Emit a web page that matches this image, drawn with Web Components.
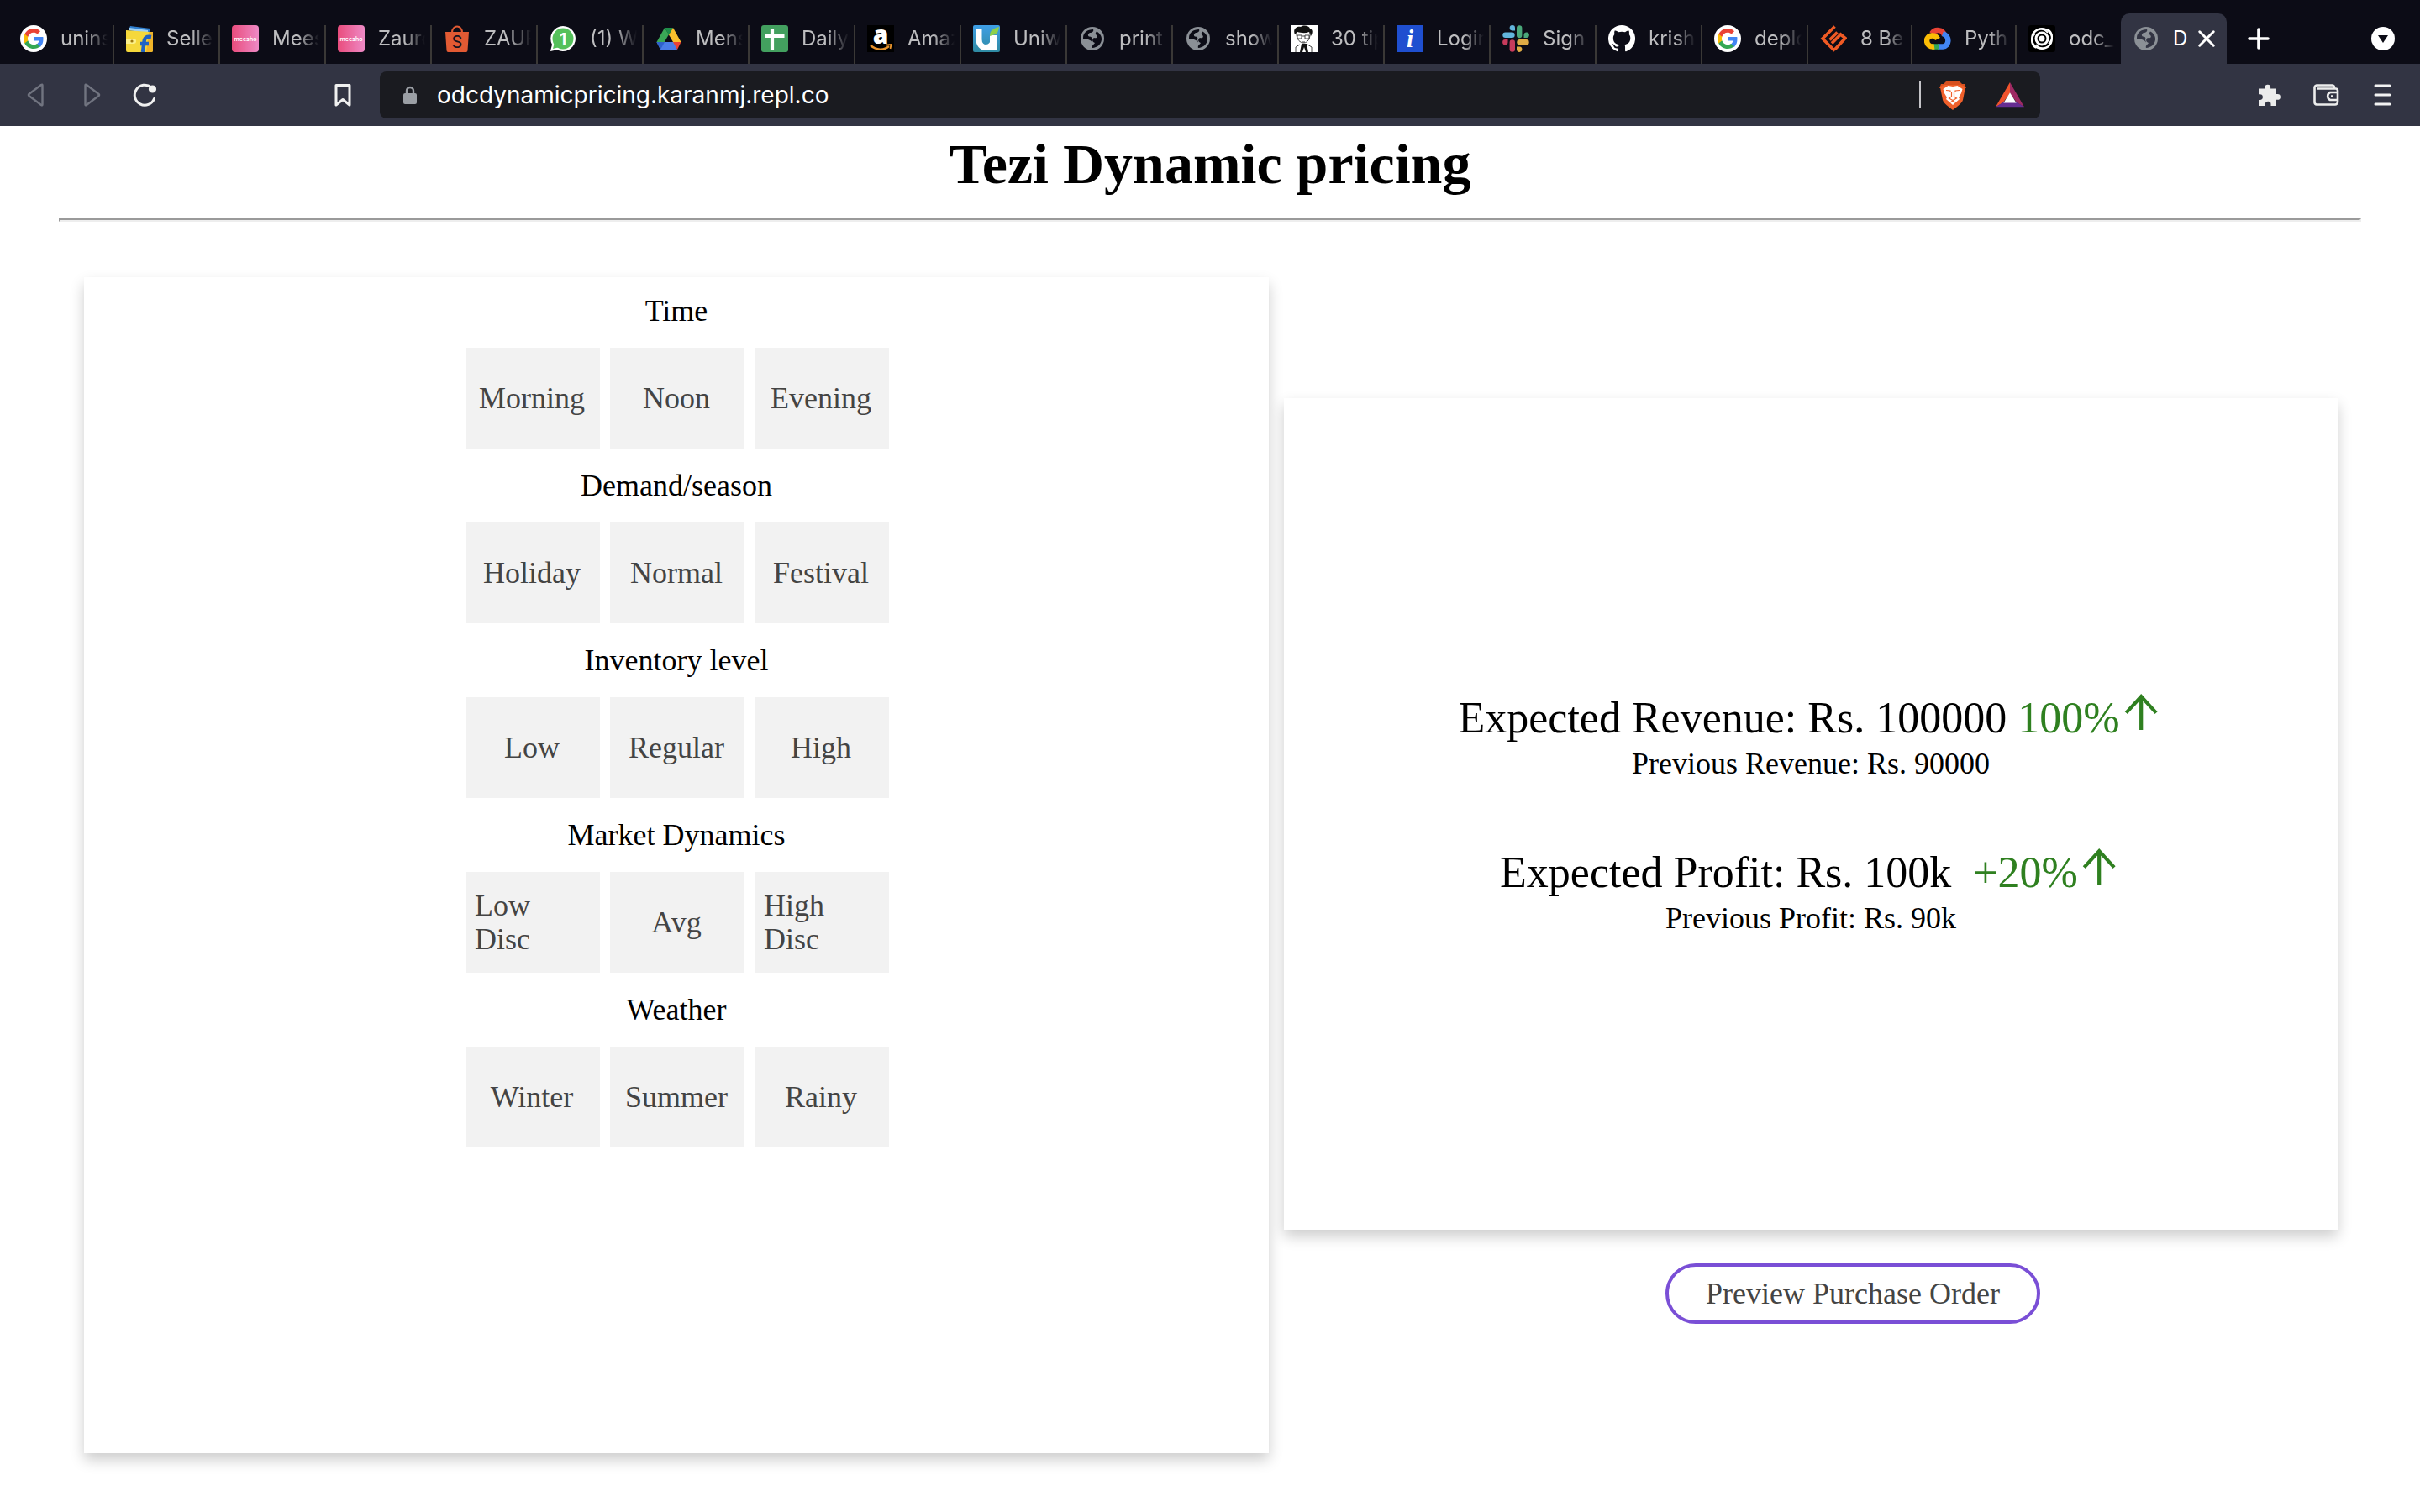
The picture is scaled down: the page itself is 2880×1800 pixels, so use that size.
<!DOCTYPE html>
<html lang="en">
<head>
<meta charset="utf-8">
<title>Dynamic pricing</title>
<style>
  html, body { margin: 0; background: #fff; }
  body { font-family: "Liberation Serif", "Times New Roman", serif; font-size: 36px; line-height: 40px; color: #000; }
</style>
</head>
<body>
<browser-window>
  <tab-strip slot="tabs"></tab-strip>
  <address-toolbar slot="toolbar" url="odcdynamicpricing.karanmj.repl.co"></address-toolbar>
  <pricing-page></pricing-page>
</browser-window>

<script>
const ICONS = {
  google: `<circle cx="16" cy="16" r="16" fill="#fff"/><g transform="translate(4 4)"><path fill="#4285f4" d="M23.5 12.3c0-.9-.1-1.500-.2-2.200H12v4.500h6.500c-.3 1.700-1.300 3-2.700 3.900v3.200h4.300c2.300-2.200 3.400-5.300 3.400-9.400z"/><path fill="#34a853" d="M12 24c3.200 0 6-1.100 8-2.900l-4-3.100c-1.100.8-2.500 1.200-4 1.200-3.100 0-5.800-2.100-6.700-4.900H1.300v3.100C3.300 21.300 7.300 24 12 24z"/><path fill="#fbbc05" d="M5.300 14.300c-.5-1.500-.5-3.100 0-4.600V6.600h-4c-1.700 3.400-1.700 7.400 0 10.800z"/><path fill="#ea4335" d="M12 4.800c1.800 0 3.300.6 4.600 1.800L20 3.200C18 1.200 15.200 0 12 0 7.300 0 3.300 2.700 1.300 6.600l4 3.100C6.200 6.900 8.900 4.800 12 4.800z"/></g>`,
  flipkart: `<path fill="#2f7fd0" d="M5 1l24 3-2 6L3 6z"/><path fill="#9fd0f2" d="M4 3l22 3v3L3 6z"/><path fill="#f5d83b" d="M0 6l27 2h5v22a2 2 0 0 1-2 2H2a2 2 0 0 1-2-2z"/><path fill="#f0b429" d="M27 8h5v22a2 2 0 0 1-2 2h-6z"/><path fill="#fbf08a" d="M0 16h9a3 3 0 0 1 0 6H0z"/><circle cx="7" cy="19" r="1.600" fill="#a07a10"/><path d="M30 14c-6-1-8 1-8.500 6L20 32M17 22h10" stroke="#1e62c4" stroke-width="4.500" fill="none"/>`,
  meesho: `<defs><linearGradient id="m"><stop stop-color="#e94c7c"/><stop offset="1" stop-color="#ee8ac6"/></linearGradient></defs><rect width="32" height="32" rx="4" fill="url(#m)"/><text x="16" y="19" text-anchor="middle" font-family="Inter" font-weight="600" font-size="7" fill="#fff">meesho</text>`,
  shopee: `<path d="M10 9c0-10 12-10 12 0" stroke="#e25a33" stroke-width="2" fill="none"/><path fill="#e25a33" d="M2 8h28l-1.500 22a2 2 0 0 1-2 2h-21a2 2 0 0 1-2-2z"/><text x="16" y="27" text-anchor="middle" font-family="Inter" font-size="20" fill="#151320">S</text>`,
  whatsapp: `<path fill="#fff" d="M16 1a15 15 0 1 1-7 28.300L1 31l2-8A15 15 0 0 1 16 1z"/><circle cx="16" cy="16" r="12.500" fill="#55c15b"/><path fill="#55c15b" d="M4 28l2-8 6 6z"/><text x="16" y="23" text-anchor="middle" font-family="Inter" font-weight="700" font-size="19" fill="#fff">1</text>`,
  drive: `<path fill="#3aa757" d="M11 3L1.500 20 6 28 16 11z"/><path fill="#1e8e4a" d="M11 3h10l-5 8.500z"/><path fill="#fbc02d" d="M21 3l9.500 17H21L16 11.500z"/><path fill="#4a7de8" d="M1.500 20h22L26 29H6z"/><path fill="#2f62cc" d="M1.500 20H11l-5 9z"/><path fill="#ea4335" d="M21 20h9.500L26 29z"/>`,
  sheet: `<rect width="32" height="32" rx="3" fill="#43a05f"/><path d="M4.500 13h23M13 4v25" stroke="#fff" stroke-width="4.200"/>`,
  amazon: `<rect width="32" height="32" fill="#000"/><text x="16" y="22" text-anchor="middle" font-family="Open Sans" font-weight="800" font-size="30" fill="#fff">a</text><path d="M4 24c7 6 16 6 22 1" stroke="#e8932c" stroke-width="2.400" fill="none"/><path d="M23 23.500l5.500-.5-1 5" stroke="#e8932c" stroke-width="1.800" fill="none"/>`,
  uniware: `<defs><linearGradient id="u" x2="0" y2="1"><stop stop-color="#3f9fe6"/><stop offset="1" stop-color="#2f8ba3"/></linearGradient></defs><rect width="32" height="32" rx="2" fill="url(#u)"/><path d="M7 4v13c0 13 17 12 17 0" stroke="#fff" stroke-width="7" fill="none"/><path d="M20 12v18h8V12z" fill="#fff"/><path d="M20 13c0-7 4-9 11-11-1 6-2 9-8 10z" fill="#8ed04b"/>`,
  globe: `<circle cx="16" cy="16" r="14" fill="#8b9096"/><path fill="var(--hole,#0c0c16)" d="M5 15C5 9 10 5 17 5c1 2-1 4-4 4-2 1-3 3-1 4.500 3 0 4 1.500 3 4l1 3c-2-3-6-4.500-11-4.500zM21 7.500c4 2 6.500 6 6 10C26 23 22 26.500 16 27c-1-3 2-4 3-6-3-1-4-4-1-6 3 1 5-1 3-3s-1-3 0-4.500z"/>`,
  avatar: `<rect width="32" height="32" fill="#fff"/><path fill="#111" d="M5 11C2 4 8 1 12 2c4-3 10-1 11 2 4 1 3 6 1 9l-2-5c-5 2-10 1-14 0z"/><path d="M7 9c-1 15 17 17 16 0M8 12h5v4H8zM17 12h5v4h-5zM13 13h4M13 20h4M11 23l-5 3v6M20 23l5 3v6" stroke="#444" stroke-width="1" fill="none"/><path fill="#111" d="M13 22h6l2 10h-3l-2-6-2 6h-3z"/>`,
  login: `<rect width="32" height="32" fill="#1f4fd0"/><text x="16" y="26" text-anchor="middle" font-family="Liberation Serif" font-style="italic" font-weight="700" font-size="29" fill="#fff">i</text>`,
  slack: `<g stroke-width="6.400" stroke-linecap="round"><path stroke="#62b5dc" d="M3.500 11.800h8"/><path stroke="#4aa87a" d="M20.200 3.500v8.500"/><path stroke="#e0ac45" d="M20.500 20.200h8"/><path stroke="#c83b5c" d="M11.800 20.500v8"/></g><path fill="#62b5dc" d="M15 6.500h-3.500A3.200 3.200 0 1 1 15 3.300z"/><path fill="#4aa87a" d="M25.500 15v-3.500a3.200 3.200 0 1 1 3.300 3.500z"/><path fill="#e0ac45" d="M17 25.500h3.500a3.200 3.200 0 1 1-3.500 3.300z"/><path fill="#c83b5c" d="M6.500 17v3.500A3.200 3.200 0 1 1 3.200 17z"/>`,
  github: `<path fill="#fff" transform="scale(2)" d="M8 0a8 8 0 0 0-2.530 15.590c.4.070.550-.170.550-.380v-1.500c-2.010.37-2.530-.490-2.690-.940-.090-.23-.480-.940-.820-1.130-.280-.150-.680-.520-.010-.530.630-.010 1.080.580 1.230.820.720 1.210 1.870.870 2.330.660.070-.520.280-.870.510-1.070-1.780-.2-3.640-.890-3.640-3.950 0-.870.310-1.590.820-2.150-.080-.2-.360-1.020.080-2.120 0 0 .670-.210 2.200.820a7.400 7.400 0 0 1 4 0c1.530-1.040 2.200-.820 2.200-.820.440 1.100.160 1.920.080 2.120.510.560.820 1.270.820 2.150 0 3.070-1.870 3.750-3.650 3.950.290.250.540.730.540 1.480v2.200c0 .210.150.460.550.380A8 8 0 0 0 8 0z"/>`,
  gfg: `<path d="M17.500 1.500L3 16l14.500 14.500M11.500 17.500L20.500 8.500M17.500 29L30 15.500l-5.500-4.500L14 21.500" stroke="#f05a24" stroke-width="3.600" fill="none"/>`,
  cloud: `<g fill="none" stroke-width="6.500"><path stroke="#ea4335" d="M9 10c4-6 13-5 15 2"/><path stroke="#4285f4" d="M22 10c9 3 8 15 0 15.500h-6"/><path stroke="#34a853" d="M17 25.500H9"/><path stroke="#fbbc05" d="M12 25.500C1 27 0 12 10 12.500c3 0 5 2 6 4"/></g>`,
  odc: `<rect width="32" height="32" rx="3" fill="#000"/><circle cx="16" cy="16" r="12" fill="none" stroke="#fff" stroke-width="2"/><circle cx="16" cy="16" r="7" fill="none" stroke="#fff" stroke-width="3"/><path d="M5 11c5-8 14-8 18-2M27 21c-5 8-14 8-18 2M9 27c-7-4-6-13-1-17M23 5c7 4 6 13 1 17" stroke="#fff" stroke-width="2" fill="none"/><circle cx="16" cy="16" r="3.500" fill="#fff"/>`,
  close: `<path d="M5 5l22 22M27 5L5 27" stroke="#fff" stroke-width="4" stroke-linecap="round"/>`,
  plus: `<path d="M16 5v22M5 16h22" stroke="#fff" stroke-width="3.600" stroke-linecap="round"/>`,
  menuDown: `<circle cx="16" cy="16" r="14" fill="#fff"/><path fill="#0c0c16" d="M10 12h12l-6 9z"/>`,
  back: `<path d="M22.500 4.500v23q0 1.500-1.500.5L6.500 17q-1.200-1 0-2L21 4q1.500-1 1.500.5z" stroke="#717480" stroke-width="2.400" fill="none"/>`,
  forward: `<path d="M9.500 4.500v23q0 1.500 1.500.5L25.500 17q1.200-1 0-2L11 4q-1.500-1-1.500.5z" stroke="#717480" stroke-width="2.400" fill="none"/>`,
  reload: `<path d="M27.500 20.500A12 12 0 1 1 24 7" stroke="#f0f0f0" stroke-width="3" fill="none" stroke-linecap="round"/><circle cx="25.500" cy="9" r="4.600" fill="#f0f0f0"/>`,
  bookmark: `<path d="M8 4.500h16v23.500l-8-6.500-8 6.500z" stroke="#f0f0f0" stroke-width="3" fill="none" stroke-linejoin="round"/>`,
  lock: `<rect x="8" y="14" width="16" height="13" rx="2" fill="#9b9fa5"/><path d="M12 15v-4a4 4 0 0 1 8 0v4" stroke="#9b9fa5" stroke-width="2.400" fill="none"/>`,
  brave: `<path fill="#d8501f" d="M9 1h14l4 4 3 0 2 5H0l2-5 3 0z"/><path fill="#f0602b" d="M1 9c3-3 5-3 7-3h16c2 0 4 0 7 3l-3 15c-1 4-7 8-12 12C11 32 5 28 4 24z"/><path fill="#fff" d="M4.500 11l6-4 5.500 1 5.500-1 6 4-1.500 5-3 5 1 2-8 7-8-7 1-2-3-5z"/><path d="M8 12.500l5 .5v2M24 12.500l-5 .5v2M14.500 14v6l-3 2 4.500 2.500 4.500-2.500-3-2v-6M13 27l3-2 3 2" stroke="#f0602b" stroke-width="1.200" fill="none"/>`,
  bat: `<path fill="#f0532d" d="M18 2v14L9 28 0 33z"/><path fill="#9e2a63" d="M18 2l18 31-9-5-9-12z"/><path fill="#662d91" d="M0 33l10-6h16l10 6z"/><path fill="#fff" d="M18 15l8 13H10z"/>`,
  puzzle: `<path fill="#ececec" d="M4 8.500h7.500V7a3.300 3.300 0 0 1 6.600 0v1.500H25V15h1.500a3.400 3.400 0 0 1 0 6.800H25V29h-6.500v-2a3.300 3.300 0 0 0-6.600 0v2H4v-7h1.500a3.300 3.300 0 0 0 0-6.800H4z"/>`,
  wallet: `<path d="M26 9V7a2.500 2.500 0 0 0-2.500-2.500H5A3 3 0 0 0 2.500 7v18A3 3 0 0 0 5 27.500h22a3 3 0 0 0 3-3V11a2.500 2.500 0 0 0-2.500-2.500H5M30 13h-9a5 5 0 0 0 0 9h9M22 17.500h3" stroke="#ececec" stroke-width="2.600" fill="none"/>`,
  menu: `<path d="M7 5h17M7 16h17M7 27h17" stroke="#f2f2f2" stroke-width="3" stroke-linecap="round"/>`,
  arrowUp: `<path d="M15.500 29.500V5M4.500 17L15.500 5l11 12" stroke="#2f8020" stroke-width="2.600" fill="none"/>`
};
const TALL = { brave: "0 0 32 36", bat: "0 0 36 36" };

class BaseElement extends HTMLElement {
  connectedCallback() {
    if (this.shadowRoot) return;
    this.attachShadow({ mode: "open" }).innerHTML = this.render();
  }
}

customElements.define("ui-icon", class extends BaseElement {
  render() {
    const n = this.getAttribute("name");
    return `<style>:host{display:block;flex:none;width:32px;height:32px;white-space:normal}svg{display:block;width:100%;height:100%}</style>
      <svg viewBox="${TALL[n] || "0 0 32 32"}" aria-hidden="true">${ICONS[n]}</svg>`;
  }
});

customElements.define("browser-window", class extends BaseElement {
  render() {
    return `<style>:host{display:flex;flex-direction:column;min-height:100vh}</style>
      <slot name="tabs"></slot><slot name="toolbar"></slot><slot></slot>`;
  }
});

customElements.define("browser-tab", class extends BaseElement {
  render() {
    return `<style>
      :host{display:flex;box-sizing:border-box;width:126px;flex:none;align-items:flex-end}
      :host([narrow]){width:124px}
      button{all:unset;box-sizing:border-box;display:flex;align-items:center;gap:16px;width:100%;height:46px;
        padding:0 6px 14px 14px;border-right:2px solid #3a3836;color:#bdbdbf;
        font:24px/32px Inter,"Liberation Sans",sans-serif}
      :host([last]) button{border-right-color:transparent}
      span{flex:1;min-width:0;overflow:hidden;white-space:nowrap;
        -webkit-mask-image:linear-gradient(90deg,#000 55%,transparent);mask-image:linear-gradient(90deg,#000 55%,transparent)}
      :host([active]) button{height:60px;padding:14px 12px 14px 14px;gap:16px;border:0;border-radius:10px 10px 0 0;
        background:#323443;color:#fff;--hole:#323443}
      :host([active]) span{-webkit-mask-image:none;mask-image:none}
      ui-icon.close{width:24px;height:24px}
      :host([active]) ui-icon.close{margin-left:-8px}
    </style>
    <button role="tab" aria-selected="${this.hasAttribute("active")}">
      <ui-icon name="${this.getAttribute("icon")}"></ui-icon><span><slot></slot></span>
      ${this.hasAttribute("active") ? '<ui-icon class="close" name="close"></ui-icon>' : ""}
    </button>`;
  }
});

customElements.define("tab-strip", class extends BaseElement {
  render() {
    const tabs = [["google","unins"],["flipkart","Selle"],["meesho","Mees"],["meesho","Zauro"],["shopee","ZAUR"],
      ["whatsapp","(1) W"],["drive","Mens"],["sheet","Daily"],["amazon","Amaz"],["uniware","Uniw"],["globe","print"],
      ["globe","show"],["avatar","30 tip"],["login","Login"],["slack","Sign"],["github","krish"],["google","deplo"],
      ["gfg","8 Be"],["cloud","Pyth"],["odc","odc_"],["globe","D"]];
    const attr = i => i === 20 ? "active" : i === 19 ? "narrow last" : i > 16 ? "narrow" : "";
    return `<style>
      :host{display:flex;align-items:flex-end;height:76px;background:#0c0c16;padding:0 28px 0 10px}
      nav{display:flex;align-items:flex-end;flex:1;min-width:0}
      .tool{all:unset;display:block;height:32px;margin-bottom:14px}
      .add{margin-left:22px}
    </style>
    <nav role="tablist">${tabs.map(([icon, t], i) =>
      `<browser-tab icon="${icon}" ${attr(i)}>${t}</browser-tab>`).join("")}
      <button class="tool add" aria-label="New tab"><ui-icon name="plus"></ui-icon></button></nav>
    <button class="tool" aria-label="Search tabs"><ui-icon name="menuDown"></ui-icon></button>`;
  }
});

customElements.define("address-toolbar", class extends BaseElement {
  render() {
    return `<style>
      :host{display:flex;align-items:center;height:74px;background:#323443;padding:0 28px}
      button{all:unset;display:block}
      .nav{display:flex;gap:32px;flex:none;width:364px}
      .mark{flex:none;width:60px}
      .bar{display:flex;align-items:center;flex:1;height:56px;border-radius:8px;background:#1a1b20;padding:0 18px 0 20px}
      input{all:unset;flex:1;margin-left:16px;color:#fff;font:28px/40px Inter,"Liberation Sans",sans-serif}
      .rule{width:2px;height:32px;background:#c4c4c8;margin-right:22px}
      .brave{height:36px}.bat{width:36px;height:34px;margin-left:34px}
      .tools{display:flex;gap:36px;flex:none;margin-left:256px}
    </style>
    <div class="nav">
      <button aria-label="Back"><ui-icon name="back"></ui-icon></button>
      <button aria-label="Forward"><ui-icon name="forward"></ui-icon></button>
      <button aria-label="Reload"><ui-icon name="reload"></ui-icon></button>
    </div>
    <div class="mark"><button aria-label="Bookmark"><ui-icon name="bookmark"></ui-icon></button></div>
    <div class="bar">
      <ui-icon name="lock"></ui-icon>
      <input aria-label="Address" value="${this.getAttribute("url")}">
      <div class="rule"></div>
      <ui-icon class="brave" name="brave"></ui-icon>
      <ui-icon class="bat" name="bat"></ui-icon>
    </div>
    <div class="tools">
      <button aria-label="Extensions"><ui-icon name="puzzle"></ui-icon></button>
      <button aria-label="Wallet"><ui-icon name="wallet"></ui-icon></button>
      <button aria-label="Menu"><ui-icon name="menu"></ui-icon></button>
    </div>`;
  }
});

customElements.define("shadow-card", class extends BaseElement {
  render() {
    return `<style>:host{display:flex;flex-direction:column;align-items:center;box-sizing:border-box;
      box-shadow:0 8px 16px rgba(0,0,0,.2)}</style><slot></slot>`;
  }
});

customElements.define("option-group", class extends BaseElement {
  render() {
    const options = this.getAttribute("options").split(",");
    return `<style>
      :host{display:flex;flex-direction:column;align-items:center;gap:24px}
      h2{margin:0;padding-right:2px;font:inherit}
      div{display:grid;grid-template-columns:repeat(3,160px);gap:12px}
      button{display:flex;align-items:center;justify-content:center;box-sizing:border-box;height:120px;margin:0;
        padding:0 13px 0 11px;border:0;background:#f2f2f2;color:#444;font:inherit;text-align:left}
    </style>
    <h2 id="t"><slot></slot></h2>
    <div role="group" aria-labelledby="t">${options.map(o => `<button>${o}</button>`).join("")}</div>`;
  }
});

customElements.define("metric-block", class extends BaseElement {
  render() {
    return `<style>
      :host{display:flex;flex-direction:column;align-items:center}
      p{margin:0;line-height:44px}
      .main{display:flex;font-size:52px;line-height:64px;white-space:pre}
      .delta{color:#2f8020}
      ui-icon{width:52px;height:52px;margin-top:-2px}
    </style>
    <p class="main"><slot></slot><span class="delta">${this.getAttribute("delta")}</span><ui-icon name="arrowUp"></ui-icon></p>
    <p><slot name="previous"></slot></p>`;
  }
});

customElements.define("pill-button", class extends BaseElement {
  render() {
    return `<style>:host{display:block}
      button{display:block;box-sizing:border-box;height:72px;padding:0 44px;border:4px solid #7a4fd6;border-radius:36px;
        background:transparent;color:#444;font:inherit}</style><button><slot></slot></button>`;
  }
});

customElements.define("pricing-page", class extends BaseElement {
  render() {
    return `<style>
      :host{display:block;flex:1}
      h1{margin:0;font-size:68px;line-height:90px;text-align:center}
      hr{margin:20px 70px 66px;border:2px inset #eee}
      main{display:grid;grid-template-columns:1410fr 1254fr;gap:18px;align-items:start;padding:0 98px 70px 100px}
      .factors{gap:24px;padding:20px 0 0 2px;min-height:1400px}
      .side{display:flex;flex-direction:column;align-items:center;gap:40px;padding-top:144px}
      .results{align-self:stretch;justify-content:center;gap:76px;min-height:990px}
      pill-button{padding-left:100px}
    </style>
    <h1>Tezi Dynamic pricing</h1>
    <hr>
    <main>
      <shadow-card class="factors">
        <option-group options="Morning,Noon,Evening">Time</option-group>
        <option-group options="Holiday,Normal,Festival">Demand/season</option-group>
        <option-group options="Low,Regular,High">Inventory level</option-group>
        <option-group options="Low Disc,Avg,High Disc">Market Dynamics</option-group>
        <option-group options="Winter,Summer,Rainy">Weather</option-group>
      </shadow-card>
      <section class="side">
        <shadow-card class="results">
          <metric-block delta="100%">Expected Revenue: Rs. 100000 <span slot="previous">Previous Revenue: Rs. 90000</span></metric-block>
          <metric-block delta="+20%">Expected Profit: Rs. 100k&nbsp; <span slot="previous">Previous Profit: Rs. 90k</span></metric-block>
        </shadow-card>
        <pill-button>Preview Purchase Order</pill-button>
      </section>
    </main>`;
  }
});
</script>
</body>
</html>
